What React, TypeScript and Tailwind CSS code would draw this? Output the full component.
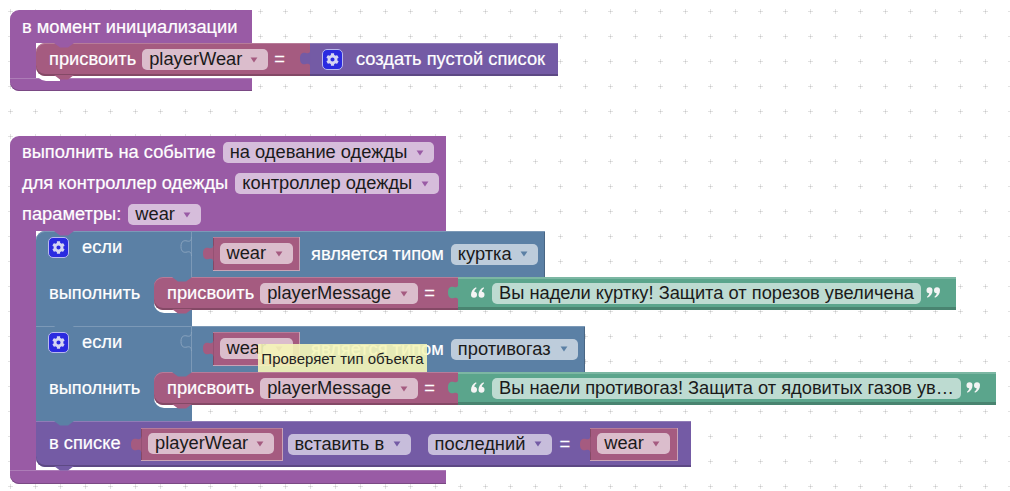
import React from 'react';
import { FaCog } from 'react-icons/fa';

type Tone = 'proc' | 'vars' | 'list' | 'logic' | 'text';

const bg: Record<Tone, string> = {
  proc: 'bg-[#995ba5]',
  vars: 'bg-[#a55b80]',
  list: 'bg-[#745ba5]',
  logic: 'bg-[#5b80a5]',
  text: 'bg-[#5ba58c]',
};
const bevel: Record<Tone, string> = {
  proc: 'shadow-[inset_0_1px_0_#ad7cb7,inset_0_-1px_0_#7a4984]',
  vars: 'shadow-[inset_0_1px_0_#b77c99,inset_0_-2px_0_#844966]',
  list: 'shadow-[inset_0_1px_0_#907cb7,inset_0_-2px_0_#5d4984]',
  logic: 'shadow-[inset_0_1px_0_#7c99b7,inset_0_-1px_0_#496684]',
  text: 'shadow-[inset_0_2px_0_#7cb7a3,inset_0_-3px_0_#498470]',
};
const fieldBg: Record<Tone, string> = {
  proc: 'bg-[#d6bddb]',
  vars: 'bg-[#dbbdcc]',
  list: 'bg-[#c7bddb]',
  logic: 'bg-[#bdccdb]',
  text: 'bg-[#bddbd1]',
};
const hex: Record<Tone, string> = { proc: '#995ba5', vars: '#a55b80', list: '#745ba5', logic: '#5b80a5', text: '#5ba58c' };

const TAB = 'M10.5 0C10.5 4.5 8 4.5 6 4C3 3.2 0 4 0 9.5C0 15 3 15.8 6 15C8 14.5 10.5 14.5 10.5 19';

const Label = ({ children, className = '' }: { children: React.ReactNode; className?: string }) => (
  <span className={`whitespace-nowrap text-white [-webkit-text-stroke:0.2px_white] ${className}`}>{children}</span>
);

const Field = ({ text, tone, className = '', arrow = true }: { text: string; tone: Tone; className?: string; arrow?: boolean }) => (
  <div className={`flex h-[21px] shrink-0 items-center justify-between rounded-[5px] pl-[7px] pr-[10px] text-[#1a1a1a] ${fieldBg[tone]} ${className}`}>
    <span className="whitespace-nowrap">{text}</span>
    {arrow && (
      <svg width="8" height="6" viewBox="0 0 9 7">
        <path d="M0.5 0.5H8.5L4.5 6.5Z" fill={hex[tone]} />
      </svg>
    )}
  </div>
);

// puzzle tab on the left of a value block
const ValueTab = ({ tone, className = 'top-[6px]' }: { tone: Tone; className?: string }) => (
  <svg width="11" height="19" viewBox="0 0 11 19" className={`absolute -left-[10px] ${className}`}>
    <path d={`${TAB}Z`} fill={hex[tone]} />
  </svg>
);

// V cut on the top edge of a statement block, painted in the parent's colour
const TopNotch = ({ tone }: { tone: Tone }) => (
  <svg width="20" height="5" viewBox="0 0 20 5" className="absolute left-[18px] top-0">
    <path d="M0 0H20L14 4.5H6Z" fill={hex[tone]} />
  </svg>
);

const BottomTab = ({ tone }: { tone: Tone }) => (
  <svg width="20" height="5" viewBox="0 0 20 5" className="absolute -bottom-[4px] left-[18px] z-10">
    <path d="M0 0H20L14 4.5H6Z" fill={hex[tone]} />
  </svg>
);

const Mutator = () => (
  <div className="flex h-[21px] w-[21px] shrink-0 items-center justify-center rounded-[5px] border border-[#b9b9ee] bg-[#2a2ae0]">
    <FaCog className="h-[13px] w-[13px] text-[#d5d5f2]" />
  </div>
);

const Quote = ({ flip = false }: { flip?: boolean }) => (
  <svg width="15" height="11" viewBox="0 0 15 11" className={flip ? 'mb-[2px] rotate-180' : 'mb-[2px]'}>
    <path d="M0.5 3.2a3 3 0 0 1 6 0c0 3.4-2 6.2-5 7.6l-0.6-1c1.4-1 2.2-2.2 2.3-3.5a3 3 0 0 1-2.7-3.1Z" fill="#f4f4f4" />
    <path d="M8 3.2a3 3 0 0 1 6 0c0 3.4-2 6.2-5 7.6l-0.6-1c1.4-1 2.2-2.2 2.3-3.5a3 3 0 0 1-2.7-3.1Z" fill="#f4f4f4" />
  </svg>
);

const VarBlock = ({ text, className, fieldClass }: { text: string; className: string; fieldClass: string }) => (
  <div className={`relative flex shrink-0 items-center justify-center border-r border-b border-[#c9a3b6] shadow-[inset_0_1px_0_#b77c99,inset_1px_0_0_#844966] ${bg.vars} ${className}`}>
    <ValueTab tone="vars" className="top-[7px]" />
    <Field text={text} tone="vars" className={fieldClass} />
  </div>
);

const TextBlock = ({ text, className, fieldClass }: { text: string; className: string; fieldClass: string }) => (
  <div className={`relative flex h-[33px] shrink-0 items-center pl-[12px] ${bg.text} ${bevel.text} ${className}`}>
    <ValueTab tone="text" />
    <Quote flip />
    <Field text={text} tone="text" arrow={false} className={`ml-[7px] mr-[5px] ${fieldClass}`} />
    <Quote />
  </div>
);

const Assign = ({ notch, children, fieldClass, name, className }: { notch: Tone; children: React.ReactNode; fieldClass: string; name: string; className: string }) => (
  <div className="relative flex shrink-0">
    <span className="absolute -bottom-[3px] left-0 h-[16px] w-[24px] rounded-bl-[10px] bg-white" />
    <div className={`relative flex h-[33px] items-center rounded-l-[9px] pl-[13px] ${bg.vars} ${bevel.vars} ${className}`}>
      <TopNotch tone={notch} />
      <BottomTab tone="vars" />
      <Label>присвоить</Label>
      <Field text={name} tone="vars" className={`ml-[6px] ${fieldClass}`} />
      <Label className="ml-[6px]">=</Label>
    </div>
    {children}
  </div>
);

const IfRows = ({ field, fieldClass, rowClass, notch, value }: { field: string; fieldClass: string; rowClass: string; notch: Tone; value: React.ReactNode }) => (
  <>
    <div className={`relative flex shadow-[inset_0_1px_0_#7c99b7,inset_-1px_0_0_#496684] ${bg.logic} ${rowClass}`}>
      <TopNotch tone={notch} />
      <div className="relative flex w-[156px] shrink-0 items-start border-r border-[#7c99b7] pl-[12px] pt-[6px]">
        <Mutator />
        <Label className="ml-[13px] leading-[20px]">если</Label>
        <svg width="12" height="20" viewBox="-1 0 12 20" className="absolute -right-px top-[6px]">
          <path d={TAB} fill="none" stroke="#8aa4bf" strokeWidth="1" />
        </svg>
      </div>
      <div className="flex items-center pl-[21px]">
        <VarBlock text="wear" className="h-[34px] w-[87px]" fieldClass="w-[73px]" />
        <Label className="ml-[11px]">является типом</Label>
        <Field text={field} tone="logic" className={`ml-[7px] ${fieldClass}`} />
      </div>
    </div>
    <div className={`relative flex h-[49px] w-[156px] items-start pl-[13px] ${bg.logic}`}>
      <Label className="mt-[7px] w-[105px] shrink-0">выполнить</Label>
      <Assign notch="logic" name="playerMessage" fieldClass="w-[158px]" className="w-[304px]">
        {value}
      </Assign>
    </div>
  </>
);

export default function App() {
  return (
    <div className="relative h-[491px] w-[1010px] overflow-hidden bg-white font-['Liberation_Sans',Arial,sans-serif] text-[18.3px] leading-none">
      <svg className="absolute inset-0 h-full w-full">
        <defs>
          <pattern id="dots" width="25" height="25" patternUnits="userSpaceOnUse" x="-2" y="-1">
            <rect x="10" y="12" width="5" height="1" fill="#e2e2e2" />
            <rect x="12" y="10" width="1" height="5" fill="#e2e2e2" />
            <rect x="12" y="12" width="1" height="1" fill="#c8c8c8" />
          </pattern>
        </defs>
        <rect width="100%" height="100%" fill="url(#dots)" />
      </svg>

      <div className="relative flex flex-col pl-[10px] pt-[10px]">
        {/* в момент инициализации */}
        <div className="flex flex-col">
          <div className={`flex h-[33px] w-[242px] items-center rounded-tl-[9px] pl-[12px] pt-[2px] ${bg.proc}`}>
            <Label>в момент инициализации</Label>
          </div>
          <div className="flex h-[35px]">
            <div className={`w-[26px] ${bg.proc}`} />
            <Assign notch="proc" name="playerWear" fieldClass="w-[126px]" className="w-[274px]">
              <div className={`relative flex h-[33px] w-[248px] items-center pl-[12px] ${bg.list} ${bevel.list}`}>
                <ValueTab tone="list" />
                <Mutator />
                <Label className="ml-[13px]">создать пустой список</Label>
              </div>
            </Assign>
          </div>
          <div className={`h-[13px] w-[242px] rounded-bl-[9px] ${bg.proc} ${bevel.proc}`} />
        </div>

        {/* выполнить на событие */}
        <div className="mt-[45px] flex flex-col">
          <div className={`flex h-[95px] w-[436px] flex-col rounded-tl-[9px] pl-[12px] pt-[1px] ${bg.proc}`}>
            <div className="flex h-[31px] items-center">
              <Label>выполнить на событие</Label>
              <Field text="на одевание одежды" tone="proc" className="ml-[7px] w-[211px]" />
            </div>
            <div className="flex h-[31px] items-center">
              <Label>для контроллер одежды</Label>
              <Field text="контроллер одежды" tone="proc" className="ml-[7px] w-[204px]" />
            </div>
            <div className="flex h-[31px] items-center">
              <Label>параметры:</Label>
              <Field text="wear" tone="proc" className="ml-[7px] w-[73px]" />
            </div>
          </div>
          <div className="flex">
            <div className={`w-[26px] shrink-0 ${bg.proc}`} />
            <div className="flex flex-col">
              <IfRows
                field="куртка"
                fieldClass="w-[87px]"
                notch="proc"
                rowClass="h-[46px] w-[509px] rounded-tl-[9px]"
                value={<TextBlock text="Вы надели куртку! Защита от порезов увеличена" className="w-[498px]" fieldClass="w-[429px]" />}
              />
              <IfRows
                field="противогаз"
                fieldClass="w-[127px]"
                notch="logic"
                rowClass="h-[46px] w-[549px]"
                value={<TextBlock text="Вы наели противогаз! Защита от ядовитых газов ув…" className="w-[538px]" fieldClass="w-[469px]" />}
              />
              <div className={`relative flex h-[46px] w-[655px] items-center rounded-bl-[9px] pl-[13px] ${bg.list} ${bevel.list}`}>
                <BottomTab tone="list" />
                <TopNotch tone="logic" />
                <Label className="-mt-[2px]">в списке</Label>
                <VarBlock text="playerWear" className="ml-[20px] h-[33px] w-[142px]" fieldClass="w-[126px]" />
                <Field text="вставить в" tone="list" className="ml-[5px] w-[123px]" />
                <Field text="последний" tone="list" className="ml-[17px] w-[124px]" />
                <Label className="ml-[8px]">=</Label>
                <VarBlock text="wear" className="ml-[20px] h-[33px] w-[88px]" fieldClass="w-[73px]" />
              </div>
              <div className="h-[3px]" />
            </div>
          </div>
          <div className={`h-[14px] w-[436px] rounded-bl-[9px] ${bg.proc} ${bevel.proc}`} />
        </div>
      </div>

      <div className="absolute left-[258px] top-[344px] flex h-[28px] w-[169px] items-center justify-center bg-[#f5f5b8]/90 text-[15px] text-[#222]">
        Проверяет тип объекта
      </div>
    </div>
  );
}
